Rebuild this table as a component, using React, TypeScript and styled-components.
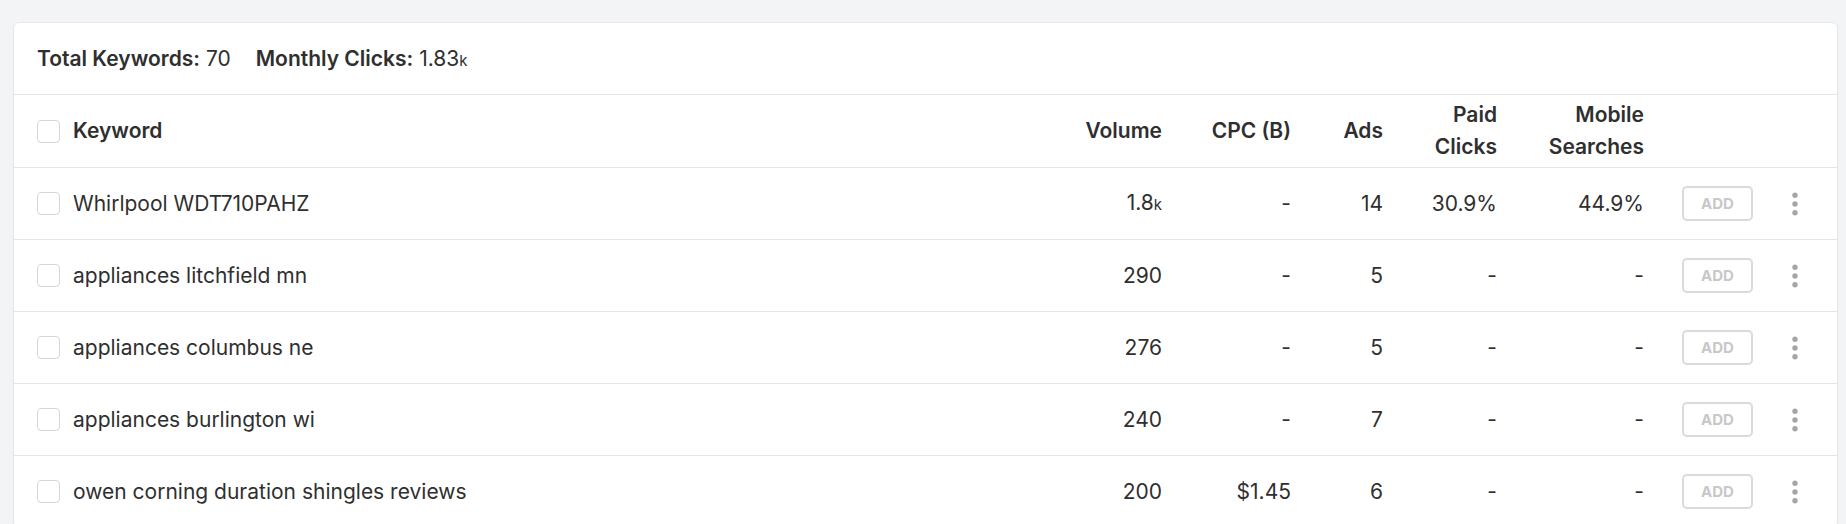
import React from "react";
import styled, { createGlobalStyle } from "styled-components";

const GlobalStyle = createGlobalStyle`
  html, body {
    margin: 0;
    padding: 0;
    background: #f3f4f6;
    font-family: Inter, "Noto Sans", "Liberation Sans", sans-serif;
    color: #2f2f2f;
  }
  * { box-sizing: border-box; }
`;

const Page = styled.div`
  padding: 22px 8px 0 13px;
`;

const Card = styled.div`
  background: #ffffff;
  border: 1px solid #e6e7ea;
  border-radius: 6px;
  box-shadow: 0 1px 2px rgba(0, 0, 0, 0.04);
  overflow: hidden;
`;

const Summary = styled.div`
  display: flex;
  align-items: center;
  gap: 25px;
  height: 71px;
  padding: 0 0 1px 23px;
  font-size: 21px;
`;

const Stat = styled.span`
  white-space: nowrap;
`;

const StatLabel = styled.b`
  font-weight: 600;
`;

const Unit = styled.span`
  font-size: 15px;
`;

const columns = "1fr 120px 129px 92px 114px 147px 109px 84px";

const HeaderRow = styled.div`
  display: grid;
  grid-template-columns: ${columns};
  align-items: center;
  height: 73px;
  padding-left: 23px;
  border-top: 1px solid #e5e5e5;
  font-size: 21px;
  font-weight: 600;
  line-height: 32px;
`;

const Row = styled.div`
  display: grid;
  grid-template-columns: ${columns};
  align-items: center;
  height: 72px;
  padding-left: 23px;
  border-top: 1px solid #e5e5e5;
  font-size: 21px;
  line-height: 32px;
`;

const KeywordCell = styled.div`
  display: flex;
  align-items: center;
  gap: 13px;
  white-space: nowrap;
`;

const NumCell = styled.div`
  text-align: right;
`;

const ActionCell = styled.div<{ $center?: boolean }>`
  display: flex;
  align-items: center;
  justify-content: ${(p) => (p.$center ? "center" : "flex-end")};
`;

const Checkbox = styled.span`
  display: inline-block;
  width: 23px;
  height: 23px;
  border: 1px solid #d4d6da;
  border-radius: 4px;
  background: #fff;
  flex: none;
`;

const AddButton = styled.button`
  width: 71px;
  height: 35px;
  border: 2px solid #dadada;
  border-radius: 5px;
  background: #fff;
  color: #c8c8c8;
  font-family: Inter, "Noto Sans", "Liberation Sans", sans-serif;
  font-size: 15px;
  font-weight: 700;
  padding: 0;
  cursor: default;
`;

const Kebab = () => (
  <svg width="6" height="24" viewBox="0 0 6 24" aria-hidden="true">
    <circle cx="3" cy="3.3" r="2.7" fill="#a6a6a6" />
    <circle cx="3" cy="12" r="2.7" fill="#a6a6a6" />
    <circle cx="3" cy="20.7" r="2.7" fill="#a6a6a6" />
  </svg>
);

type Item = {
  keyword: string;
  volume: React.ReactNode;
  cpc: string;
  ads: string;
  paid: string;
  mobile: string;
};

const items: Item[] = [
  {
    keyword: "Whirlpool WDT710PAHZ",
    volume: (
      <>
        1.8<Unit>k</Unit>
      </>
    ),
    cpc: "-",
    ads: "14",
    paid: "30.9%",
    mobile: "44.9%",
  },
  { keyword: "appliances litchfield mn", volume: "290", cpc: "-", ads: "5", paid: "-", mobile: "-" },
  { keyword: "appliances columbus ne", volume: "276", cpc: "-", ads: "5", paid: "-", mobile: "-" },
  { keyword: "appliances burlington wi", volume: "240", cpc: "-", ads: "7", paid: "-", mobile: "-" },
  { keyword: "owen corning duration shingles reviews", volume: "200", cpc: "$1.45", ads: "6", paid: "-", mobile: "-" },
];

export default function App() {
  return (
    <>
      <GlobalStyle />
      <Page>
        <Card>
          <Summary>
            <Stat>
              <StatLabel>Total Keywords:</StatLabel> 70
            </Stat>
            <Stat>
              <StatLabel>Monthly Clicks:</StatLabel> 1.83<Unit>k</Unit>
            </Stat>
          </Summary>
          <HeaderRow>
            <KeywordCell>
              <Checkbox />
              Keyword
            </KeywordCell>
            <NumCell>Volume</NumCell>
            <NumCell>CPC (B)</NumCell>
            <NumCell>Ads</NumCell>
            <NumCell>
              Paid
              <br />
              Clicks
            </NumCell>
            <NumCell>
              Mobile
              <br />
              Searches
            </NumCell>
            <div />
            <div />
          </HeaderRow>
          {items.map((it) => (
            <Row key={it.keyword}>
              <KeywordCell>
                <Checkbox />
                {it.keyword}
              </KeywordCell>
              <NumCell>{it.volume}</NumCell>
              <NumCell>{it.cpc}</NumCell>
              <NumCell>{it.ads}</NumCell>
              <NumCell>{it.paid}</NumCell>
              <NumCell>{it.mobile}</NumCell>
              <ActionCell>
                <AddButton>ADD</AddButton>
              </ActionCell>
              <ActionCell $center>
                <Kebab />
              </ActionCell>
            </Row>
          ))}
        </Card>
      </Page>
    </>
  );
}
